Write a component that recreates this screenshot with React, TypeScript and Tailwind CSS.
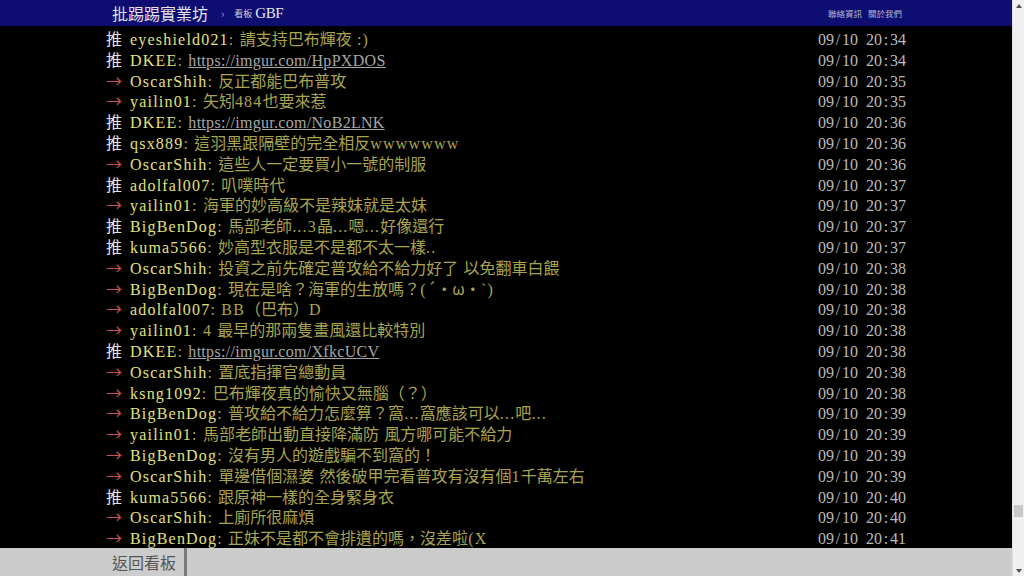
import React from "react";

type Push = { tag: "推" | "→"; user: string; text: string; time: string; link?: boolean };

const pushes: Push[] = [
  { tag: "推", user: "eyeshield021", text: "請支持巴布輝夜 :)", time: "09/10 20:34" },
  { tag: "推", user: "DKEE", text: "https://imgur.com/HpPXDOS", time: "09/10 20:34", link: true },
  { tag: "→", user: "OscarShih", text: "反正都能巴布普攻", time: "09/10 20:35" },
  { tag: "→", user: "yailin01", text: "矢矧484也要來惹", time: "09/10 20:35" },
  { tag: "推", user: "DKEE", text: "https://imgur.com/NoB2LNK", time: "09/10 20:36", link: true },
  { tag: "推", user: "qsx889", text: "這羽黑跟隔壁的完全相反wwwwwww", time: "09/10 20:36" },
  { tag: "→", user: "OscarShih", text: "這些人一定要買小一號的制服", time: "09/10 20:36" },
  { tag: "推", user: "adolfal007", text: "叭噗時代", time: "09/10 20:37" },
  { tag: "→", user: "yailin01", text: "海軍的妙高級不是辣妹就是太妹", time: "09/10 20:37" },
  { tag: "推", user: "BigBenDog", text: "馬部老師...3晶...嗯...好像還行", time: "09/10 20:37" },
  { tag: "推", user: "kuma5566", text: "妙高型衣服是不是都不太一樣..", time: "09/10 20:37" },
  { tag: "→", user: "OscarShih", text: "投資之前先確定普攻給不給力好了 以免翻車白餵", time: "09/10 20:38" },
  { tag: "→", user: "BigBenDog", text: "現在是啥？海軍的生放嗎？(´・ω・`)", time: "09/10 20:38" },
  { tag: "→", user: "adolfal007", text: "BB（巴布）D", time: "09/10 20:38" },
  { tag: "→", user: "yailin01", text: "4 最早的那兩隻畫風還比較特別", time: "09/10 20:38" },
  { tag: "推", user: "DKEE", text: "https://imgur.com/XfkcUCV", time: "09/10 20:38", link: true },
  { tag: "→", user: "OscarShih", text: "置底指揮官總動員", time: "09/10 20:38" },
  { tag: "→", user: "ksng1092", text: "巴布輝夜真的愉快又無腦（？）", time: "09/10 20:38" },
  { tag: "→", user: "BigBenDog", text: "普攻給不給力怎麼算？窩...窩應該可以...吧...", time: "09/10 20:39" },
  { tag: "→", user: "yailin01", text: "馬部老師出動直接降滿防 風方哪可能不給力", time: "09/10 20:39" },
  { tag: "→", user: "BigBenDog", text: "沒有男人的遊戲騙不到窩的！", time: "09/10 20:39" },
  { tag: "→", user: "OscarShih", text: "單邊借個濕婆 然後破甲完看普攻有沒有個1千萬左右", time: "09/10 20:39" },
  { tag: "推", user: "kuma5566", text: "跟原神一樣的全身緊身衣", time: "09/10 20:40" },
  { tag: "→", user: "OscarShih", text: "上廁所很麻煩", time: "09/10 20:40" },
  { tag: "→", user: "BigBenDog", text: "正妹不是都不會排遺的嗎，沒差啦(X", time: "09/10 20:41" },
];

// latin runs in a serif face, spaced out a bit like the BBS half-width font
function Mixed({ text }: { text: string }) {
  return (
    <>
      {text.split(/([\x20-\x7e]+)/).map((part, i) =>
        /^[\x20-\x7e]+$/.test(part) ? (
          <span key={i} className="font-['Liberation_Serif',serif] tracking-[1.2px] whitespace-pre">
            {part}
          </span>
        ) : (
          part
        )
      )}
    </>
  );
}

// fixed 8px cells, terminal style
function Cells({ text }: { text: string }) {
  return (
    <span className="font-['Liberation_Serif',serif]">
      {text.split("").map((c, i) => (
        <span key={i} className="inline-block w-2 text-center">
          {c === " " ? "\u00a0" : c}
        </span>
      ))}
    </span>
  );
}

export default function App() {
  return (
    <div className="flex h-[576px] w-[1024px] overflow-hidden bg-black font-['Noto_Sans_CJK_TC','Liberation_Serif',serif]">
      <div className="flex w-[1012px] flex-col">
        {/* Top bar */}
        <div className="h-[26px] shrink-0 bg-[#0d0d72]">
          <div className="mx-auto flex h-full w-[800px] items-center justify-between pl-[6px] pr-[4px]">
            <div className="flex items-center">
              <span className="text-[16px] leading-none text-[#e2e2e2]">批踢踢實業坊</span>
              <span className="ml-[13px] text-[11px] leading-none text-[#aaaacc]">›</span>
              <span className="ml-[10px] text-[9px] leading-none text-[#d0d0d0]">看板</span>
              <span className="ml-[3px] font-['Liberation_Serif',serif] text-[15px] leading-none tracking-[-0.5px] text-[#e8e8e8]">GBF</span>
            </div>
            <div className="flex gap-[6px] text-[8.5px] leading-none text-[#b8b8d0]">
              <span>聯絡資訊</span>
              <span>關於我們</span>
            </div>
          </div>
        </div>

        {/* Push list */}
        <div className="flex-1 overflow-hidden pt-[2px]">
          <div className="mx-auto w-[800px] text-[16px] leading-[20.8px]">
            {pushes.map((p, i) => (
              <div key={i} className="flex h-[20.8px] whitespace-nowrap">
                <span className={`inline-block w-4 ${p.tag === "推" ? "text-[#e6e6e6]" : "text-[#d05252]"}`}>{p.tag}</span>
                <span className="w-2" />
                <span className="text-[#e2e27a]">
                  <Mixed text={p.user} />
                </span>
                <span className="text-[#a8a44e]">
                  <Mixed text=": " />
                  {p.link ? (
                    <span className="font-['Liberation_Serif',serif] tracking-[0.3px] text-[#a6a6a6] underline underline-offset-1">
                      {p.text}
                    </span>
                  ) : (
                    <Mixed text={p.text} />
                  )}
                </span>
                <span className="ml-auto text-[#bbbbbb]">
                  <Cells text={p.time} />
                </span>
              </div>
            ))}
          </div>
        </div>

        {/* Bottom bar */}
        <div className="flex h-[28px] shrink-0 bg-[#cccccc]">
          <div className="mx-auto flex w-[800px]">
            <div className="flex items-center border-r-[3px] border-[#7a7a7a] pl-[6px] pr-[8px] text-[16px] leading-none text-[#555555]">
              返回看板
            </div>
          </div>
        </div>
      </div>

      {/* Scrollbar */}
      <div className="flex w-[12px] flex-col items-center border-l border-[#e2e2e2] bg-[#f0f0f0]">
        <div className="flex h-[11px] items-center justify-center">
          <div className="h-0 w-0 border-x-[3px] border-b-[4px] border-x-transparent border-b-[#505050]" />
        </div>
        <div className="flex-1" />
        <div className="h-[12px] w-[9px] bg-[#c8c8c8]" />
        <div className="h-[48px]" />
        <div className="flex h-[11px] items-center justify-center">
          <div className="h-0 w-0 border-x-[3px] border-t-[4px] border-x-transparent border-t-[#505050]" />
        </div>
      </div>
    </div>
  );
}
